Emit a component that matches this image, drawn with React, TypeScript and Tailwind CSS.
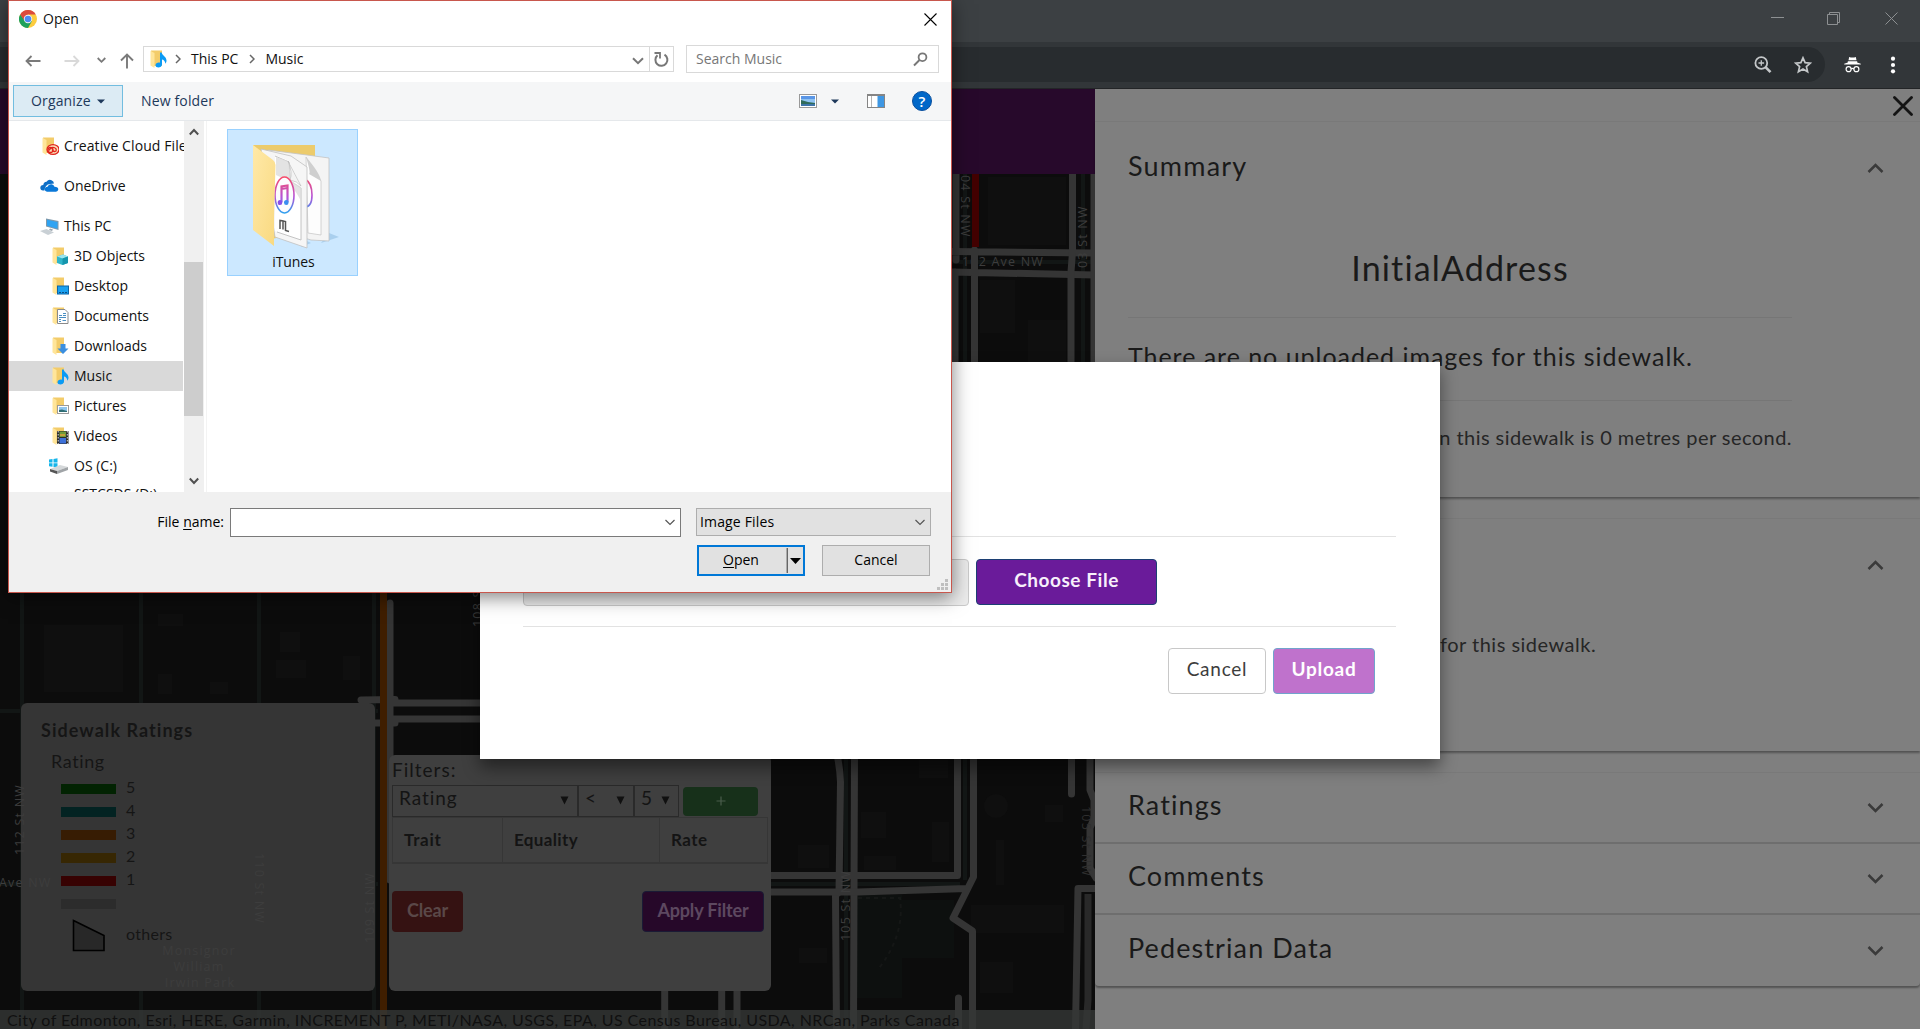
import type { ReactNode } from "react";

/* ---------- map ---------- */

const SIDEWALKS = [
  "M956 174V260M952 251.5L1095 253M952 272L1095 275M974.5 250V362M955 272V362",
  "M1072.5 174V252L1071 272V362M1094 174V362M1077 270",
  "M361 700L395 699.5M364 723H395M390 603V880M392 703H480M392 719H480",
  "M837 755Q840 768 840.5 782L839 892L835.5 895L836.5 1029",
  "M854.5 755L853.5 1029M768 875.5H957.5V755",
  "M768 892H858L967 888.5M973.5 755V877L953 918L972.5 931V1029",
  "M958.5 998V1029M1071.5 755V794",
  "M1090 755V790L1094 800V818L1090 828V868L1096 878M1095 888.5H1078L1075.5 1029",
  "M664.7 985V1029M721.7 985V1029M737 985V1029",
];

function MapCanvas() {
  return (
    <svg className="absolute inset-0" width="1095" height="855" viewBox="0 174 1095 855">
      <rect y="174" width="1095" height="855" fill="#0c0c0c" />
      <g fill="#0f0f0f">
        <path d="M44 625H123V692H44zM158 614H183V626H158zM280 632H300V652H280zM276 660H306V678H276zM343 656H360V680H343zM158 674H172V694H158zM210 682H228V694H210z" />
        <path d="M988 177H1066V245H988zM980 280H1015V333H980zM1028 320H1066V362H1028z" />
        <path d="M861 812H886V838H861zM932 822H949V862H932zM864 856H896V870H864zM798 845H829V868H798zM919 760H948V778H919zM996 840H1004V885H996zM971 905H1064V933H971zM980 962H1013V993H980zM1045 805H1063V822H1045zM799 948H827V963H799z" />
        <circle cx="996" cy="806" r="12" />
      </g>
      <path d="M857 895H902V998H857zM902 900H954V958H902z" fill="#0d100f" />
      <g stroke="#121615" strokeWidth="4" fill="none">
        <path d="M22 590V1029M141 590V1029M259 590V1029M374 590V1029M0 711H378M0 884H378" />
        <path d="M846 755V1029M965 755V880M768 884H960M965 174V362M1083 174V362M952 262H1095" />
      </g>
      <path d="M858 898H900Q905 935 879 968" fill="none" stroke="#151716" strokeDasharray="4 4" strokeWidth="2" />
      <g fill="#3d3d3d" fontFamily="Open Sans" fontSize="12.5" letterSpacing="1.2">
        <text x="962" y="265.5">102 Ave NW</text>
        <text transform="translate(961 175) rotate(90)">04 St NW</text>
      </g>
      <path d="M1088 894V1000L1086 1029" fill="none" stroke="#292929" strokeWidth="7" />
      <g fill="none" stroke="#353535" strokeWidth="7" strokeLinejoin="round" strokeLinecap="round">
        {SIDEWALKS.map((d) => (
          <path key={d} d={d} />
        ))}
      </g>
      <path d="M975.5 174V247" stroke="#430000" strokeWidth="7" />
      <path d="M383.5 590V1029" stroke="#3f1e00" strokeWidth="7" />
    </svg>
  );
}

function MapLabels() {
  return (
    <svg className="pointer-events-none absolute inset-0" width="1095" height="855" viewBox="0 174 1095 855">
      <g fill="#3d3d3d" fontFamily="Open Sans" fontSize="12.5" letterSpacing="1.2">
        <text transform="translate(1087 268) rotate(-90)">03 St NW</text>
        <text transform="translate(850 941) rotate(-90)">105 St NW</text>
        <text transform="translate(1082 806) rotate(90)" fill="#2f2f2f">105 St NW</text>
        <text transform="translate(24 855) rotate(-90)">112 St NW</text>
        <text transform="translate(374 943) rotate(-90)">109 St NW</text>
        <text transform="translate(255 853) rotate(90)">110 St NW</text>
        <text transform="translate(482 627) rotate(-90)">108 S</text>
        <text x="-1" y="887">Ave NW</text>
        <g textAnchor="middle">
          <text x="199" y="955">Monsignor</text>
          <text x="199" y="971">William</text>
          <text x="200" y="987">Irwin Park</text>
        </g>
      </g>
    </svg>
  );
}

const LEGEND = [
  { color: "bg-[#022302]", label: "5" },
  { color: "bg-[#032322]", label: "4" },
  { color: "bg-[#371c03]", label: "3" },
  { color: "bg-[#372703]", label: "2" },
  { color: "bg-[#370202]", label: "1" },
  { color: "bg-[#2c2c2c]", label: "" },
];

function Legend() {
  return (
    <div className="h-[288px] w-[354px] rounded-md bg-[#353535] pt-[15px] pl-[20px] text-[#151515]">
      <div className="text-[18px] leading-6 font-bold tracking-[1.05px]">Sidewalk Ratings</div>
      <div className="mt-[7px] pl-[10px] text-[18px] leading-6 tracking-[0.6px]">Rating</div>
      <div className="flex flex-col pt-[2px] pl-[20px]">
        {LEGEND.map((row) => (
          <div key={row.color} className="flex h-[23px] items-center gap-[10px]">
            <div className={`mt-1 h-[10px] w-[55px] ${row.color}`} />
            <span className="text-[16px] leading-5">{row.label}</span>
          </div>
        ))}
      </div>
      <div className="flex items-center pt-[6px] pl-[31px]">
        <svg width="34" height="34" viewBox="0 0 34 34">
          <path d="M1.500 1.500L32 16.500V31.500H1.500Z" fill="#282828" stroke="#000" strokeWidth="1.600" />
        </svg>
        <span className="ml-5 pb-1 text-[16px] leading-5 tracking-[0.3px]">others</span>
      </div>
    </div>
  );
}

function MapSelect({ className, children }: { className: string; children: ReactNode }) {
  return (
    <div className={`flex h-8 items-center justify-between border border-[#2a2a2a] pr-[8px] pb-[5px] pl-[6px] text-[19px] tracking-[0.95px] ${className}`}>
      <span>{children}</span>
      <svg width="9" height="9" viewBox="0 0 9 9" className="mt-1">
        <path d="M0.500 0.500H8.500L4.500 8.500Z" fill="#101010" />
      </svg>
    </div>
  );
}

function Filters() {
  return (
    <div className="h-[236px] w-[382px] rounded-md bg-[#3f3f3f] pt-[3px] pr-[3px] pl-[3px] text-[#141414]">
      <div className="h-[27px] text-[19px] leading-6 tracking-[1px]">Filters:</div>
      <div className="flex items-center">
        <MapSelect className="w-[186px]">Rating</MapSelect>
        <MapSelect className="w-[56px]">&lt;</MapSelect>
        <MapSelect className="w-[45px]">5</MapSelect>
        <div className="ml-1 flex h-[29px] w-[75px] items-center justify-center rounded bg-[#17301a] text-[#4a5c4b]">
          <svg width="10" height="10" viewBox="0 0 10 10">
            <path d="M5 0.500V9.500M0.500 5H9.500" stroke="currentColor" strokeWidth="1.200" />
          </svg>
        </div>
      </div>
      <div className="flex h-[47px] items-center border border-b-2 border-[#363636] text-[17px] font-bold">
        <div className="flex h-full w-[110px] items-center border-r border-[#363636] pb-px pl-[11px] tracking-[0.7px]">Trait</div>
        <div className="flex h-full w-[157px] items-center border-r border-[#363636] pb-px pl-[11px] tracking-[0.35px]">Equality</div>
        <div className="pb-px pl-[11px] tracking-[0.45px]">Rate</div>
      </div>
      <div className="mt-[27px] flex justify-between pr-1 text-[18px] font-bold">
        <div className="flex h-[41px] w-[71px] items-center justify-center rounded bg-[#351212] pb-[3px] tracking-[-0.15px] text-[#5a4848]">Clear</div>
        <div className="flex h-[41px] w-[122px] items-center justify-center rounded border border-[#1a1a35] bg-[#260829] pb-[3px] tracking-[-0.15px] text-[#5d4860]">Apply Filter</div>
      </div>
    </div>
  );
}

function MapPane() {
  return (
    <div className="flex w-[1095px] flex-col overflow-hidden">
      <div className="h-[85px] shrink-0 bg-[#27092b]" />
      <div className="relative flex grow flex-col justify-end">
        <MapCanvas />
        <div className="relative flex items-end gap-[14px] pb-[19px] pl-[21px]">
          <Legend />
          <Filters />
        </div>
        <div className="relative h-[19px] overflow-hidden bg-[#343736]/80 pl-[7px] text-[16px] leading-[20px] tracking-[0.42px] whitespace-nowrap text-[#101010]">
          City of Edmonton, Esri, HERE, Garmin, INCREMENT P, METI/NASA, USGS, EPA, US Census Bureau, USDA, NRCan, Parks Canada
        </div>
        <MapLabels />
      </div>
    </div>
  );
}

/* ---------- details pane ---------- */

function Chevron({ up }: { up?: boolean }) {
  return (
    <svg width="17" height="10" viewBox="0 0 17 10" className={up ? "" : "rotate-180"}>
      <path d="M1.500 9L8.500 2L15.500 9" fill="none" stroke="#3a3a3a" strokeWidth="2.500" />
    </svg>
  );
}

function CollapsedRow({ title, last }: { title: string; last?: boolean }) {
  return (
    <div className={`flex h-[71px] items-center justify-between pr-9 pb-[5px] pl-[33px] ${last ? "" : "border-b-2 border-[#6e6e6e]"}`}>
      <h2 className="text-[27px] tracking-[1.1px]">{title}</h2>
      <div className="pt-[6px]">
        <Chevron />
      </div>
    </div>
  );
}

function DetailsPane() {
  return (
    <div className="w-[825px] bg-[#7f7f7f] text-[#1a1a1a]">
      <div className="flex h-8 items-center justify-end pt-[2px] pr-[7px]">
        <svg width="20" height="20" viewBox="0 0 20 20">
          <path d="M1.500 1.500L18.500 18.500M18.500 1.500L1.500 18.500" stroke="#141414" strokeWidth="2.800" strokeLinecap="round" />
        </svg>
      </div>
      <section className="h-[376px] border-t border-[#797979] pl-[33px] shadow-[0_2px_2px_rgba(0,0,0,0.35)]">
        <div className="flex h-[88px] items-center justify-between pr-9">
          <h2 className="text-[27px] tracking-[1.2px]">Summary</h2>
          <div className="pt-1">
            <Chevron up />
          </div>
        </div>
        <div className="w-[664px]">
          <h1 className="flex h-[108px] items-center justify-center border-b border-[#767676] pt-[8px] text-[34px] tracking-[1.15px]">InitialAddress</h1>
          <div className="flex h-[83px] items-center border-b border-[#767676] pb-[5px] text-[25px] tracking-[0.97px] whitespace-nowrap">
            There are no uploaded images for this sidewalk.
          </div>
          <div className="flex h-[74px] items-center justify-end pb-[3px] text-[20px] tracking-[0.45px] whitespace-nowrap text-[#262626]">
            on this sidewalk is 0 metres per second.
          </div>
        </div>
      </section>
      <section className="mt-[21px] h-[233px] border-t border-[#797979] shadow-[0_2px_2px_rgba(0,0,0,0.35)]">
        <div className="flex h-[92px] items-center justify-end pr-9">
          <Chevron up />
        </div>
        <div className="pt-[18px] pl-[345px] text-[20px] tracking-[0.5px] text-[#262626]">for this sidewalk.</div>
      </section>
      <section className="mt-[21px] h-[214px] rounded-b border-t border-[#797979] shadow-[0_2px_2px_rgba(0,0,0,0.35)]">
        <CollapsedRow title="Ratings" />
        <CollapsedRow title="Comments" />
        <CollapsedRow title="Pedestrian Data" last />
      </section>
    </div>
  );
}

/* ---------- browser frame ---------- */

function BrowserFrame() {
  return (
    <header className="shrink-0">
      <div className="flex h-[42px] justify-end bg-[#3c4043] pr-[22px] text-[#8d9092]">
        <div className="flex items-start gap-[43px] pt-3">
          <svg width="13" height="13" viewBox="0 0 13 13">
            <path d="M0 5.500H13" stroke="currentColor" />
          </svg>
          <svg width="13" height="13" viewBox="0 0 13 13">
            <path d="M0.500 2.500H10.500V12.500H0.500ZM2.500 2.500V0.500H12.500V10.500H10.500" fill="none" stroke="currentColor" />
          </svg>
          <svg width="13" height="13" viewBox="0 0 13 13" className="ml-[2px]">
            <path d="M0.500 0.500L12.500 12.500M12.500 0.500L0.500 12.500" stroke="currentColor" />
          </svg>
        </div>
      </div>
      <div className="flex h-[47px] items-center border-b border-[#232527] bg-[#323639] pb-px text-white">
        <div className="flex h-[35px] w-[1825px] items-center justify-end gap-[22px] rounded-r-full bg-[#282c2f] pr-[13px] text-[#c4c7c9]">
          <svg width="18" height="18" viewBox="0 0 18 18" fill="none" stroke="currentColor">
            <circle cx="7.300" cy="7" r="5.900" strokeWidth="1.800" />
            <path d="M11.500 11.200L16.500 16.200" strokeWidth="2.600" />
            <path d="M7.300 4.200V9.800M4.500 7H10.100" strokeWidth="1.300" />
          </svg>
          <svg width="18" height="18" viewBox="0 0 18 18" fill="none" stroke="currentColor" strokeWidth="1.700">
            <path d="M9 1.800L11.100 6.600L16.300 7.100L12.400 10.600L13.600 15.800L9 13L4.400 15.800L5.600 10.600L1.700 7.100L6.900 6.600Z" />
          </svg>
        </div>
        <svg width="17" height="17" viewBox="0 0 17 17" className="ml-[19px]" fill="#fff">
          <path d="M5.200 1Q8.500 2 11.800 1L12.500 4.300H4.500ZM3.800 5.300H13.200V6.500L16.800 7.700V8.500H0.200V7.700L3.800 6.500Z" />
          <g fill="none" stroke="#fff" strokeWidth="1.200">
            <circle cx="4.600" cy="13.200" r="2.500" />
            <circle cx="12.400" cy="13.200" r="2.500" />
            <path d="M7 12.900Q8.500 12 10 12.900" />
          </g>
        </svg>
        <svg width="6" height="18" viewBox="0 0 6 18" className="ml-[29px]" fill="#fff">
          <circle cx="3" cy="2.700" r="2.100" />
          <circle cx="3" cy="9" r="2.100" />
          <circle cx="3" cy="15.300" r="2.100" />
        </svg>
      </div>
    </header>
  );
}

/* ---------- upload modal ---------- */

function UploadModal() {
  return (
    <div className="absolute top-[362px] left-[480px] h-[397px] w-[960px] bg-white pt-[174px] pr-[44px] pl-[43px] shadow-[0_8px_16px_rgba(0,0,0,0.45)]">
      <div className="h-px bg-[#e2e2e2]" />
      <div className="mt-[22px] flex gap-[7px]">
        <div className="h-[47px] w-[446px] rounded border border-[#cacaca] bg-[#ebebeb]" />
        <div className="flex h-[46px] w-[181px] items-center justify-center rounded border border-[#1c3f73] bg-[#6a1b9a] pb-[3px] text-[19px] font-bold tracking-[0.55px] text-[#f7effb]">Choose File</div>
      </div>
      <div className="mt-5 h-px bg-[#e2e2e2]" />
      <div className="mt-[21px] flex justify-end gap-[7px] pr-[21px] text-[19px]">
        <div className="flex h-[46px] w-[98px] items-center justify-center rounded border border-[#c8c8c8] pb-[3px] tracking-[0.75px] text-[#3d3d3d]">Cancel</div>
        <div className="flex h-[46px] w-[102px] items-center justify-center rounded border border-[#71a3cc] bg-[#bf72cc] pb-[3px] font-bold tracking-[0.7px] text-white">Upload</div>
      </div>
    </div>
  );
}

/* ---------- file dialog ---------- */

function Folder({ children }: { children?: ReactNode }) {
  return (
    <svg width="18" height="18" viewBox="0 0 18 18" className="shrink-0">
      <path d="M2 0.500H13V16H4Z" fill="#f3cc6a" />
      <path d="M1.500 1L5.500 3V18L1.500 15.500Z" fill="#ffe59a" />
      {children}
    </svg>
  );
}

const NOTE = (
  <path d="M11 2.500H12.700C13 5.500 17.500 6.500 17.500 10.500C17.500 12 17 12.800 16.300 13.800C16.300 10.800 14.500 9.800 13 9.500V14.500C13 18.300 6.500 18.500 6.500 15.300C6.500 13 9 12.200 11 12.700Z" fill="#0a9bf5" />
);

const FOLDER_BADGES: Record<string, ReactNode> = {
  "3D Objects": (
    <>
      <path d="M6 9.500L12 7.500L17 9.500V16L11.500 18L6 16Z" fill="#2fb5c9" />
      <path d="M6 9.500L12 7.500L17 9.500L11.500 11.500Z" fill="#9be5ef" />
      <path d="M11.500 11.500L17 9.500V16L11.500 18Z" fill="#1595ad" />
    </>
  ),
  Desktop: (
    <>
      <rect x="6.500" y="9" width="11" height="8" fill="#18a0f0" stroke="#0b65a8" />
      <path d="M8 15.500H16" stroke="#0b4f87" strokeDasharray="2 1" />
    </>
  ),
  Documents: (
    <>
      <path d="M6.500 2.500H14L17 5.500V16.500H6.500Z" fill="#fff" stroke="#8a8a8a" />
      <path d="M8 8.500H11M12 6.500H15M12 8.500H15M8 10.500H15M8 12.500H10M8 14.500H10M11.500 13.500H15" stroke="#4b8fc2" />
    </>
  ),
  Downloads: <path d="M9.500 7H14.500V11.500H17.500L12 17L6.500 11.500H9.500Z" fill="#3b8fe0" />,
  Music: NOTE,
  Pictures: (
    <>
      <rect x="6.500" y="8.500" width="11" height="8" fill="#fff" stroke="#9a9a9a" />
      <rect x="8" y="10" width="8" height="5" fill="#8ec5ee" />
      <path d="M8 13L11 12.500L16 14V15H8Z" fill="#2f6d74" />
    </>
  ),
  Videos: (
    <>
      <rect x="6" y="4" width="11.500" height="13" fill="#2d2d2d" />
      <rect x="8.500" y="4.500" width="6.500" height="5.500" fill="#6f9b3a" />
      <rect x="8.500" y="11" width="6.500" height="5.500" fill="#3d71d9" />
      <path d="M9 8H14" stroke="#e0a13a" strokeWidth="1.500" />
      <path d="M7.200 4V17M16.300 4V17" stroke="#d8d8d8" strokeDasharray="1.500 1.500" />
    </>
  ),
};

const PLACES = ["3D Objects", "Desktop", "Documents", "Downloads", "Music", "Pictures", "Videos"];

function Sidebar() {
  return (
    <div className="h-[371px] w-[175px] overflow-hidden whitespace-nowrap">
      <div className="mt-[10px] flex h-[30px] items-center gap-[5px] pl-[32px]">
        <Folder>
          <g fill="none" stroke="#e0231c" strokeWidth="1.300">
            <ellipse cx="12" cy="12.500" rx="6" ry="4.800" fill="#fbe0b8" />
            <circle cx="9.500" cy="13" r="2.500" />
            <path d="M8 13.500Q10 9.500 13 10.500T15 14Q12.500 15.500 11 12.500" />
          </g>
        </Folder>
        <span className="w-[120px] overflow-hidden tracking-[0.1px]">Creative Cloud Files</span>
      </div>
      <div className="mt-[10px] flex h-[30px] items-center gap-[5px] pl-[31px]">
        <svg width="19" height="14" viewBox="0 0 19 14">
          <path d="M4.500 11.500H3Q0.300 11.300 0.300 8.800T3.300 6Q3.500 3 6.500 2.800Q8.500 0 11.500 1.200Q13.800 2 14 4.500L10 5Q5 5.500 4.500 11.500Z" fill="#0f6fc6" />
          <path d="M7 12.700Q4.500 12.300 4.800 9.800Q5.200 7.700 7.500 7.800Q8.500 4.800 11.500 5.200Q13.700 5.500 14.500 7.700Q18.300 7.800 18.300 10.500Q18 12.600 16 12.700Z" fill="#0a78d8" />
        </svg>
        OneDrive
      </div>
      <div className="mt-[10px] flex h-[30px] items-center gap-[5px] pl-[31px]">
        <svg width="19" height="17" viewBox="0 0 19 17">
          <path d="M6 0.500L18.500 3V12L6 8.500Z" fill="#7d98ab" />
          <path d="M7 1.800L17.500 4V10.800L7 7.800Z" fill="#2ea3f2" />
          <path d="M0 13L6.500 11L14 14.500L8 17Z" fill="#c9d0d5" />
          <path d="M10 10.500L13 11.500L12 13L9 12Z" fill="#9aa5ad" />
        </svg>
        This PC
      </div>
      {PLACES.map((p) => (
        <div key={p} className={`flex h-[30px] w-[174px] items-center gap-[5px] pl-[42px] ${p === "Music" ? "bg-[#d9d9d9]" : ""}`}>
          <Folder>{FOLDER_BADGES[p]}</Folder>
          {p}
        </div>
      ))}
      <div className="flex h-[30px] items-center gap-[6px] pl-[40px]">
        <svg width="19" height="16" viewBox="0 0 19 16">
          <path d="M0 1.500L3.500 1V4.500H0ZM4.500 0.900L8.500 0.300V4.500H4.500ZM0 5.300H3.500V8.800L0 8.300ZM4.500 5.300H8.500V9.500L4.500 9Z" fill="#16b5ea" />
          <path d="M1 11L11 7L19 9L8 13Z" fill="#d5d8da" />
          <path d="M1 11L8 13V16L1 13.500Z" fill="#555" />
          <path d="M8 13L19 9V12L8 16Z" fill="#a0a4a7" />
        </svg>
        OS (C:)
      </div>
      <div className="h-[30px] pl-[65px] leading-[26px]">SSTCSDS (D:)</div>
    </div>
  );
}

function ScrollBar() {
  return (
    <div className="flex h-[371px] w-5 flex-col items-center bg-[#f0f0f0] pt-[7px] pr-px pb-[7px]">
      <svg width="10" height="8" viewBox="0 0 10 8">
        <path d="M0.800 6.500L5 2L9.200 6.500" fill="none" stroke="#505050" strokeWidth="2" />
      </svg>
      <div className="mt-[126px] h-[154px] w-full bg-[#cdcdcd]" />
      <svg width="10" height="8" viewBox="0 0 10 8" className="mt-auto">
        <path d="M0.800 1.500L5 6L9.200 1.500" fill="none" stroke="#505050" strokeWidth="2" />
      </svg>
    </div>
  );
}

function ItunesFolder() {
  return (
    <svg width="90" height="106" viewBox="0 0 90 106">
      <defs>
        <linearGradient id="flap" x1="0" y1="0" x2="1" y2="1">
          <stop offset="0" stopColor="#ffe9a8" />
          <stop offset="1" stopColor="#f9d980" />
        </linearGradient>
        <linearGradient id="note" gradientUnits="userSpaceOnUse" x1="0" y1="33" x2="0" y2="71">
          <stop offset="0" stopColor="#fb4a63" />
          <stop offset="0.550" stopColor="#b553d8" />
          <stop offset="1" stopColor="#28a6f0" />
        </linearGradient>
      </defs>
      <path d="M70 100L88 94L78 90ZM50 104L60 100L54 97Z" fill="#a9cfee" />
      <path d="M2 2H64V88L20 96L2 84Z" fill="#eccb6c" />
      <path d="M17 7L56 12L78 15V98L60 97L30 88Z" fill="#f4f4f4" stroke="#c3c3c3" strokeWidth="0.800" />
      <path d="M55 14L70 38V92L57 90Z" fill="#fdfdfd" stroke="#bbb" strokeWidth="0.600" />
      <path d="M55 14Q60 30 58 31L70 38Q69 30 55 14Z" fill="#cfcfcf" />
      <path d="M54 36Q61 40 61 52T54 64" fill="none" stroke="url(#note)" strokeWidth="1.600" />
      <path d="M10 6L40 13L56 24V105L24 94Z" fill="#f6f6f6" stroke="#c0c0c0" strokeWidth="0.800" />
      <path d="M24 12L38 18L50 43V97L24 88Z" fill="#fff" />
      <path d="M24 13L38 19L39 38L50 45V97L26 89" fill="none" stroke="#bdbdbd" strokeWidth="0.900" />
      <path d="M25 14L37 18Q41 34 39 37L50 44V58Q40 38 25 32Z" fill="#dcdcdc" opacity="0.800" />
      <path d="M37 18Q42 30 39 37Q46 38 50 43Z" fill="#f3f3f3" stroke="#b5b5b5" strokeWidth="0.600" />
      <ellipse cx="33.500" cy="52" rx="9.500" ry="18" fill="#fcfcfe" stroke="url(#note)" strokeWidth="1.600" />
      <path d="M30.500 59V43.500L36.500 42.500V59M30.500 46L36.500 45" fill="none" stroke="url(#note)" strokeWidth="2.200" />
      <ellipse cx="29" cy="59.500" rx="2.300" ry="2.600" fill="#8c4ee8" />
      <ellipse cx="35.300" cy="59.500" rx="2.300" ry="2.600" fill="#3a8df0" />
      <path d="M29 86V77.500L32 78V86.500M32 78L34.500 78.500V87.500L38 88.500" fill="none" stroke="#555" strokeWidth="1.500" />
      <path d="M2 2L22 17Q24.500 19 24.500 22L23 74V103L2 87Z" fill="url(#flap)" />
    </svg>
  );
}

function ChromeLogo() {
  return (
    <svg width="18" height="18" viewBox="0 0 18 18">
      <circle cx="9" cy="9" r="9" fill="#fccc3f" />
      <path d="M1.200 4.500A9 9 0 0 0 9 18L12.900 11.200L9 9H5Z" fill="#1fa15d" />
      <path d="M1.200 4.500A9 9 0 0 1 16.800 4.500H9L5 10Z" fill="#dc4b3e" />
      <circle cx="9" cy="9" r="4.200" fill="#f3f3f3" />
      <circle cx="9" cy="9" r="3.300" fill="#4e8af4" />
    </svg>
  );
}

function ThinChevron() {
  return (
    <svg width="10" height="7" viewBox="0 0 10 7">
      <path d="M0.500 1L5 5.500L9.500 1" fill="none" stroke="#555" strokeWidth="1.200" />
    </svg>
  );
}

function NavRow() {
  return (
    <div className="flex h-[43px] items-center pb-[3px] pl-4 text-[#777]">
      <svg width="16" height="12" viewBox="0 0 16 12" className="mt-[3px]">
        <path d="M6.500 1L1.500 6L6.500 11M1.500 6H15.500" fill="none" stroke="#7a7a7a" strokeWidth="1.800" />
      </svg>
      <svg width="16" height="12" viewBox="0 0 16 12" className="mt-[3px] ml-[23px]">
        <path d="M9.500 1L14.500 6L9.500 11M14.500 6H0.500" fill="none" stroke="#d9d9d9" strokeWidth="1.800" />
      </svg>
      <svg width="9" height="7" viewBox="0 0 9 7" className="mt-[3px] ml-[17px]">
        <path d="M0.700 1L4.500 4.800L8.300 1" fill="none" stroke="#7a7a7a" strokeWidth="1.800" />
      </svg>
      <svg width="14" height="16" viewBox="0 0 14 16" className="mt-[3px] ml-[14px]">
        <path d="M1 7.500L7 1.500L13 7.500M7 1.500V15.500" fill="none" stroke="#7a7a7a" strokeWidth="1.900" />
      </svg>
      <div className="ml-[9px] flex h-[26px] w-[531px] items-center border border-[#d9d9d9] pl-[5px]">
        <Folder>{NOTE}</Folder>
        <svg width="6" height="10" viewBox="0 0 6 10" className="ml-[8px]">
          <path d="M1 1L5 5L1 9" fill="none" stroke="#666" strokeWidth="1.500" />
        </svg>
        <span className="ml-[10px] text-[#111]">This PC</span>
        <svg width="6" height="10" viewBox="0 0 6 10" className="ml-[11px]">
          <path d="M1 1L5 5L1 9" fill="none" stroke="#666" strokeWidth="1.500" />
        </svg>
        <span className="ml-[10px] text-[#111]">Music</span>
        <svg width="12" height="8" viewBox="0 0 12 8" className="mt-[3px] mr-[5px] ml-auto">
          <path d="M1 1.200L6 6.200L11 1.200" fill="none" stroke="#777" strokeWidth="2" />
        </svg>
        <div className="flex h-full w-[24px] items-center justify-center border-l border-[#d9d9d9] pt-px">
          <svg width="15" height="16" viewBox="0 0 15 16">
            <path d="M10.500 2.700A6 6 0 1 1 3.500 3.300" fill="none" stroke="#777" strokeWidth="2" />
            <path d="M0.500 1H6V6.500" fill="none" stroke="#777" strokeWidth="1.800" />
          </svg>
        </div>
      </div>
      <div className="ml-3 flex h-7 w-[253px] items-center justify-between border border-[#d9d9d9] pr-[10px] pl-[9px]">
        <span>Search Music</span>
        <svg width="15" height="15" viewBox="0 0 15 15">
          <circle cx="9.500" cy="5.200" r="3.900" fill="none" stroke="#777" strokeWidth="1.800" />
          <path d="M6.500 8L1 13.500" stroke="#777" strokeWidth="2" />
        </svg>
      </div>
    </div>
  );
}

function ToolRow() {
  return (
    <div className="flex h-[39px] items-center border-b border-[#e5e8eb] bg-[#f5f6f7] pl-1 text-[#1e395b]">
      <div className="flex h-8 w-[110px] items-center border border-[#72bde0] bg-[#dcebf4] pl-[17px]">
        <span className="tracking-[0.15px]">Organize</span>
        <svg width="8" height="5" viewBox="0 0 8 5" className="ml-[6px]">
          <path d="M0 0.500H8L4 4.500Z" fill="#1e395b" />
        </svg>
      </div>
      <span className="ml-[18px] tracking-[0.15px]">New folder</span>
      <svg width="18" height="14" viewBox="0 0 18 14" className="ml-auto">
        <rect x="0.500" y="0.500" width="17" height="13" fill="#fff" stroke="#999" />
        <rect x="2" y="2" width="14" height="10" fill="#8fc3f2" />
        <rect x="2" y="2" width="14" height="3" fill="#5a96e6" />
        <path d="M2 6L9 8L16 9V10H2Z" fill="#2e6a59" />
        <path d="M2 10H16V12H2Z" fill="#3d74a8" />
      </svg>
      <svg width="8" height="5" viewBox="0 0 8 5" className="ml-[14px]">
        <path d="M0 0.500H8L4 4.500Z" fill="#1e395b" />
      </svg>
      <svg width="18" height="14" viewBox="0 0 18 14" className="ml-[28px]">
        <rect x="0.500" y="0.500" width="17" height="13" fill="#fff" stroke="#858585" />
        <path d="M0 1H18" stroke="#858585" strokeWidth="2" />
        <path d="M4.500 2V13" stroke="#b5b5b5" />
        <rect x="10.500" y="2" width="6.500" height="11" fill="#3e97e3" />
      </svg>
      <div className="mr-[19px] ml-[27px] flex size-5 items-center justify-center rounded-full border border-[#0a4f9e] bg-[#0067c8] text-[15px] font-semibold text-white">?</div>
    </div>
  );
}

function DialogFooter() {
  return (
    <div className="relative grow bg-[#f0f0f0] pt-4 text-black">
      <div className="flex items-start">
        <span className="w-[215px] pt-[4px] text-right">
          File <span className="underline underline-offset-2">n</span>ame:
        </span>
        <div className="ml-[6px] flex h-[29px] w-[451px] items-center justify-end border border-[#7a7a7a] bg-white pr-[5px]">
          <ThinChevron />
        </div>
        <div className="ml-[15px] flex h-7 w-[235px] items-center justify-between border border-[#adadad] bg-[#e1e1e1] pr-[5px] pl-[3px]">
          <span className="tracking-[0.15px]">Image Files</span>
          <ThinChevron />
        </div>
      </div>
      <div className="mt-2 flex pl-[688px]">
        <div className="flex h-[31px] w-[108px] items-center border-2 border-[#0078d7] bg-[#e1e1e1]">
          <span className="w-[87px] pr-[3px] pb-px text-center">
            <span className="underline underline-offset-2">O</span>pen
          </span>
          <div className="h-[25px] w-[2px] border-l border-[#aaa] bg-[#666]" />
          <svg width="11" height="6" viewBox="0 0 11 6" className="ml-[2px]">
            <path d="M0 0H11L5.500 6Z" fill="#000" />
          </svg>
        </div>
        <div className="ml-[17px] flex h-[31px] w-[108px] items-center justify-center border border-[#adadad] bg-[#e1e1e1] pb-px">Cancel</div>
      </div>
      <svg width="11" height="11" viewBox="0 0 11 11" className="absolute right-[3px] bottom-[2px]">
        <path d="M8 0H11V3H8ZM4 4H7V7H4ZM8 4H11V7H8ZM0 8H3V11H0ZM4 8H7V11H4ZM8 8H11V11H8Z" fill="#bfbfbf" />
      </svg>
    </div>
  );
}

function OpenDialog() {
  return (
    <div className="absolute top-0 left-[8px] flex h-[593px] w-[944px] flex-col border border-[#c8574d] bg-white font-['Open_Sans',sans-serif] text-[14px] leading-5 text-[#111] shadow-[0_4px_18px_rgba(0,0,0,0.5)]">
      <div className="flex h-[38px] items-center pr-[14px] pb-[2px] pl-[10px]">
        <ChromeLogo />
        <span className="ml-[6px]">Open</span>
        <svg width="13" height="13" viewBox="0 0 13 13" className="ml-auto">
          <path d="M0.500 0.500L12.500 12.500M12.500 0.500L0.500 12.500" stroke="#000" strokeWidth="1.100" />
        </svg>
      </div>
      <NavRow />
      <ToolRow />
      <div className="flex h-[371px] shrink-0">
        <Sidebar />
        <ScrollBar />
        <div className="ml-[2px] border-l border-[#f3f3f3] pt-[8px] pl-[20px]">
          <div className="flex h-[147px] w-[131px] flex-col items-center border border-[#99d1ff] bg-[#cce8ff] pt-[13px] pl-[2px]">
            <div className="pl-[5px]">
              <ItunesFolder />
            </div>
            <span className="mt-[3px] tracking-[-0.1px]">iTunes</span>
          </div>
        </div>
      </div>
      <DialogFooter />
    </div>
  );
}

export default function App() {
  return (
    <div className="relative flex h-[1029px] w-[1920px] flex-col overflow-hidden bg-[#0c0c0c] font-['Lato',sans-serif]">
      <BrowserFrame />
      <main className="flex h-[940px]">
        <MapPane />
        <DetailsPane />
      </main>
      <UploadModal />
      <OpenDialog />
    </div>
  );
}
